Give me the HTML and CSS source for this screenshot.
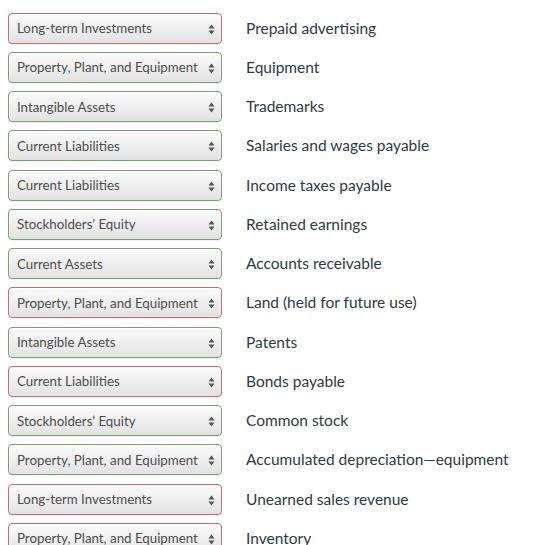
FILE: index.html
```html
<!DOCTYPE html>
<html>
<head>
<meta charset="utf-8">
<link rel="stylesheet" href="styles.css">
</head>
<body>
<div class="list">
  <div class="row"><div class="sel bad"><span class="val">Long-term Investments</span><svg class="arr" viewBox="0 0 7 11"><path d="M3.5 0.5 L6.5 4.5 H0.5 Z M3.5 10.5 L6.5 6.5 H0.5 Z"/></svg></div><span class="lbl">Prepaid advertising</span></div>
  <div class="row"><div class="sel good"><span class="val">Property, Plant, and Equipment</span><svg class="arr" viewBox="0 0 7 11"><path d="M3.5 0.5 L6.5 4.5 H0.5 Z M3.5 10.5 L6.5 6.5 H0.5 Z"/></svg></div><span class="lbl">Equipment</span></div>
  <div class="row"><div class="sel good"><span class="val">Intangible Assets</span><svg class="arr" viewBox="0 0 7 11"><path d="M3.5 0.5 L6.5 4.5 H0.5 Z M3.5 10.5 L6.5 6.5 H0.5 Z"/></svg></div><span class="lbl">Trademarks</span></div>
  <div class="row"><div class="sel good"><span class="val">Current Liabilities</span><svg class="arr" viewBox="0 0 7 11"><path d="M3.5 0.5 L6.5 4.5 H0.5 Z M3.5 10.5 L6.5 6.5 H0.5 Z"/></svg></div><span class="lbl">Salaries and wages payable</span></div>
  <div class="row"><div class="sel good"><span class="val">Current Liabilities</span><svg class="arr" viewBox="0 0 7 11"><path d="M3.5 0.5 L6.5 4.5 H0.5 Z M3.5 10.5 L6.5 6.5 H0.5 Z"/></svg></div><span class="lbl">Income taxes payable</span></div>
  <div class="row"><div class="sel good"><span class="val">Stockholders’ Equity</span><svg class="arr" viewBox="0 0 7 11"><path d="M3.5 0.5 L6.5 4.5 H0.5 Z M3.5 10.5 L6.5 6.5 H0.5 Z"/></svg></div><span class="lbl">Retained earnings</span></div>
  <div class="row"><div class="sel good"><span class="val">Current Assets</span><svg class="arr" viewBox="0 0 7 11"><path d="M3.5 0.5 L6.5 4.5 H0.5 Z M3.5 10.5 L6.5 6.5 H0.5 Z"/></svg></div><span class="lbl">Accounts receivable</span></div>
  <div class="row"><div class="sel bad"><span class="val">Property, Plant, and Equipment</span><svg class="arr" viewBox="0 0 7 11"><path d="M3.5 0.5 L6.5 4.5 H0.5 Z M3.5 10.5 L6.5 6.5 H0.5 Z"/></svg></div><span class="lbl">Land (held for future use)</span></div>
  <div class="row"><div class="sel good"><span class="val">Intangible Assets</span><svg class="arr" viewBox="0 0 7 11"><path d="M3.5 0.5 L6.5 4.5 H0.5 Z M3.5 10.5 L6.5 6.5 H0.5 Z"/></svg></div><span class="lbl">Patents</span></div>
  <div class="row"><div class="sel bad"><span class="val">Current Liabilities</span><svg class="arr" viewBox="0 0 7 11"><path d="M3.5 0.5 L6.5 4.5 H0.5 Z M3.5 10.5 L6.5 6.5 H0.5 Z"/></svg></div><span class="lbl">Bonds payable</span></div>
  <div class="row"><div class="sel good"><span class="val">Stockholders’ Equity</span><svg class="arr" viewBox="0 0 7 11"><path d="M3.5 0.5 L6.5 4.5 H0.5 Z M3.5 10.5 L6.5 6.5 H0.5 Z"/></svg></div><span class="lbl">Common stock</span></div>
  <div class="row"><div class="sel good"><span class="val">Property, Plant, and Equipment</span><svg class="arr" viewBox="0 0 7 11"><path d="M3.5 0.5 L6.5 4.5 H0.5 Z M3.5 10.5 L6.5 6.5 H0.5 Z"/></svg></div><span class="lbl">Accumulated depreciation—equipment</span></div>
  <div class="row"><div class="sel bad"><span class="val">Long-term Investments</span><svg class="arr" viewBox="0 0 7 11"><path d="M3.5 0.5 L6.5 4.5 H0.5 Z M3.5 10.5 L6.5 6.5 H0.5 Z"/></svg></div><span class="lbl">Unearned sales revenue</span></div>
  <div class="row"><div class="sel bad"><span class="val">Property, Plant, and Equipment</span><svg class="arr" viewBox="0 0 7 11"><path d="M3.5 0.5 L6.5 4.5 H0.5 Z M3.5 10.5 L6.5 6.5 H0.5 Z"/></svg></div><span class="lbl">Inventory</span></div>
</div>
</body>
</html>
```

FILE: styles.css
```css
html, body {
  margin: 0;
  padding: 0;
  background: #fff;
}
body {
  font-family: Lato, "Open Sans", sans-serif;
  overflow: hidden;
}
.list {
  display: flex;
  flex-direction: column;
  gap: 8.25px;
  padding: 12.5px 0 0 8px;
}
.row {
  display: flex;
  align-items: center;
  gap: 24px;
  height: 31px;
}
.sel {
  position: relative;
  box-sizing: border-box;
  width: 214px;
  height: 31px;
  flex: none;
  border-radius: 4px;
  border: 1px solid #c46f6d;
  background: linear-gradient(#fbfbfb, #e2e2e2);
  box-shadow: inset 0 1px 2px rgba(255,255,255,0.8), 0 1px 1px rgba(0,0,0,0.06);
  display: flex;
  align-items: center;
  padding-left: 8px;
}
.sel.good {
  border-color: #74a36f;
}
.val {
  font-size: 13.3px;
  color: #4d4d4d;
  white-space: nowrap;
}
.arr {
  position: absolute;
  right: 6px;
  top: 10px;
  width: 7px;
  height: 11px;
  fill: #555;
}
.lbl {
  font-size: 15.5px;
  color: #2d3b45;
  white-space: nowrap;
  margin-top: -1px;
}
```
